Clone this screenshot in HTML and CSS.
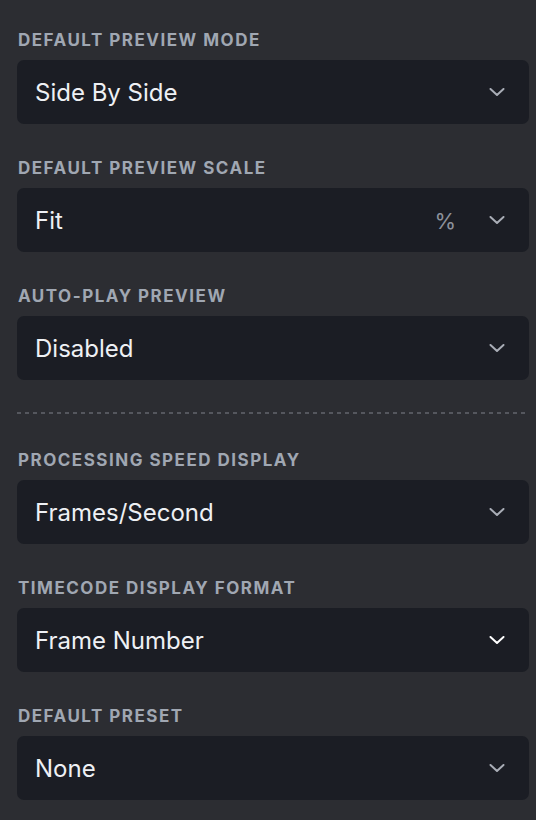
FILE: index.html
```html
<!DOCTYPE html>
<html>
<head>
<meta charset="utf-8">
<link rel="stylesheet" href="styles.css">
</head>
<body>
<div class="panel">
  <div class="field">
    <div class="label">Default Preview Mode</div>
    <div class="select">
      <span class="value">Side By Side</span>
      <svg class="chev" width="16" height="8" viewBox="0 0 16 8"><path d="M1.5 1 L8 7 L14.5 1" fill="none" stroke="currentColor" stroke-width="2" stroke-linecap="round" stroke-linejoin="round"/></svg>
    </div>
  </div>
  <div class="field">
    <div class="label">Default Preview Scale</div>
    <div class="select">
      <span class="value">Fit</span>
      <span class="unit">%</span>
      <svg class="chev" width="16" height="8" viewBox="0 0 16 8"><path d="M1.5 1 L8 7 L14.5 1" fill="none" stroke="currentColor" stroke-width="2" stroke-linecap="round" stroke-linejoin="round"/></svg>
    </div>
  </div>
  <div class="field">
    <div class="label">Auto-Play Preview</div>
    <div class="select">
      <span class="value">Disabled</span>
      <svg class="chev" width="16" height="8" viewBox="0 0 16 8"><path d="M1.5 1 L8 7 L14.5 1" fill="none" stroke="currentColor" stroke-width="2" stroke-linecap="round" stroke-linejoin="round"/></svg>
    </div>
  </div>
  <div class="divider"></div>
  <div class="field after-divider">
    <div class="label">Processing Speed Display</div>
    <div class="select">
      <span class="value">Frames/Second</span>
      <svg class="chev" width="16" height="8" viewBox="0 0 16 8"><path d="M1.5 1 L8 7 L14.5 1" fill="none" stroke="currentColor" stroke-width="2" stroke-linecap="round" stroke-linejoin="round"/></svg>
    </div>
  </div>
  <div class="field">
    <div class="label">Timecode Display Format</div>
    <div class="select active">
      <span class="value">Frame Number</span>
      <svg class="chev" width="16" height="8" viewBox="0 0 16 8"><path d="M1.5 1 L8 7 L14.5 1" fill="none" stroke="currentColor" stroke-width="2" stroke-linecap="round" stroke-linejoin="round"/></svg>
    </div>
  </div>
  <div class="field">
    <div class="label">Default Preset</div>
    <div class="select">
      <span class="value">None</span>
      <svg class="chev" width="16" height="8" viewBox="0 0 16 8"><path d="M1.5 1 L8 7 L14.5 1" fill="none" stroke="currentColor" stroke-width="2" stroke-linecap="round" stroke-linejoin="round"/></svg>
    </div>
  </div>
</div>
</body>
</html>
```
FILE: styles.css
```css
html, body {
  margin: 0;
  padding: 0;
  background: #2c2d32;
  font-family: Inter, "Noto Sans", sans-serif;
}
.panel {
  display: flex;
  flex-direction: column;
  padding: 30px 7px 20px 17px;
  width: 512px;
}
.field {
  display: flex;
  flex-direction: column;
  gap: 10px;
}
.field + .field {
  margin-top: 34px;
}
.label {
  font-size: 17px;
  line-height: 20px;
  font-weight: 700;
  letter-spacing: 1.5px;
  text-transform: uppercase;
  color: #a0a7b2;
  padding-left: 1px;
}
.select {
  display: flex;
  align-items: center;
  height: 64px;
  background: #1b1d24;
  border-radius: 7px;
  padding: 0 24px 0 18px;
  color: #a9adb6;
}
.value {
  flex: 1;
  font-size: 24px;
  color: #eef0f4;
  padding-top: 1px;
}
.unit {
  font-size: 22px;
  color: #8c919b;
  margin-right: 33px;
  padding-top: 2px;
}
.chev {
  display: block;
}
.select.active {
  color: #ffffff;
}
.divider {
  margin-top: 32px;
  height: 2px;
  background: repeating-linear-gradient(to right, #55575e 0 4px, transparent 4px 8px);
}
.after-divider {
  margin-top: 36px;
}
```
